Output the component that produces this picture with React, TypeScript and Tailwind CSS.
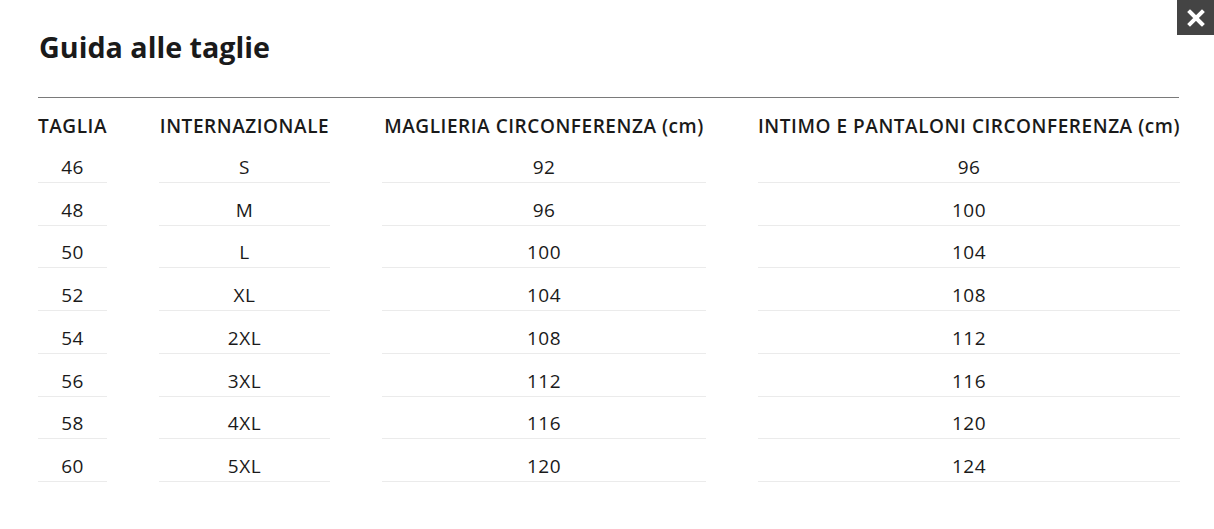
import React from "react";

const rows = [
  ["46", "S", "92", "96"],
  ["48", "M", "96", "100"],
  ["50", "L", "100", "104"],
  ["52", "XL", "104", "108"],
  ["54", "2XL", "108", "112"],
  ["56", "3XL", "112", "116"],
  ["58", "4XL", "116", "120"],
  ["60", "5XL", "120", "124"],
];

const headers = [
  "TAGLIA",
  "INTERNAZIONALE",
  "MAGLIERIA CIRCONFERENZA (cm)",
  "INTIMO E PANTALONI CIRCONFERENZA (cm)",
];

export default function App() {
  return (
    <div
      className="relative w-[1214px] h-[529px] bg-white text-[#1a1a1a]"
      style={{ fontFamily: "'Open Sans', 'Noto Sans', sans-serif" }}
    >
      <button className="absolute right-0 top-0 w-[37px] h-[35px] bg-[#444444] flex items-center justify-center">
        <svg width="18" height="18" viewBox="0 0 18 18">
          <path d="M3 3 L15 15 M15 3 L3 15" stroke="white" strokeWidth="4" strokeLinecap="square" />
        </svg>
      </button>
      <div className="pl-[38px] pr-[35px] pt-[28px]">
        <h2 className="text-[28.7px] leading-[38px] font-bold pl-[1px]">Guida alle taglie</h2>
        <div className="mt-[31px] border-t border-[#7a7a7a]">
          <div className="grid grid-cols-[69px_171px_324px_422px] gap-x-[52px]">
            {headers.map((h) => (
              <div key={h} className="h-[42px] flex items-end justify-center pb-[3px] leading-[22px] text-[19px] tracking-[0.55px] font-semibold whitespace-nowrap">
                {h}
              </div>
            ))}
            {rows.map((r, i) =>
              r.map((c, j) => (
                <div
                  key={i + "-" + j}
                  className="h-[42.75px] flex items-end justify-center pb-[4px] leading-[22px] text-[19px] tracking-[0.5px] border-b border-[#ebebeb]"
                >
                  {c}
                </div>
              ))
            )}
          </div>
        </div>
      </div>
    </div>
  );
}
